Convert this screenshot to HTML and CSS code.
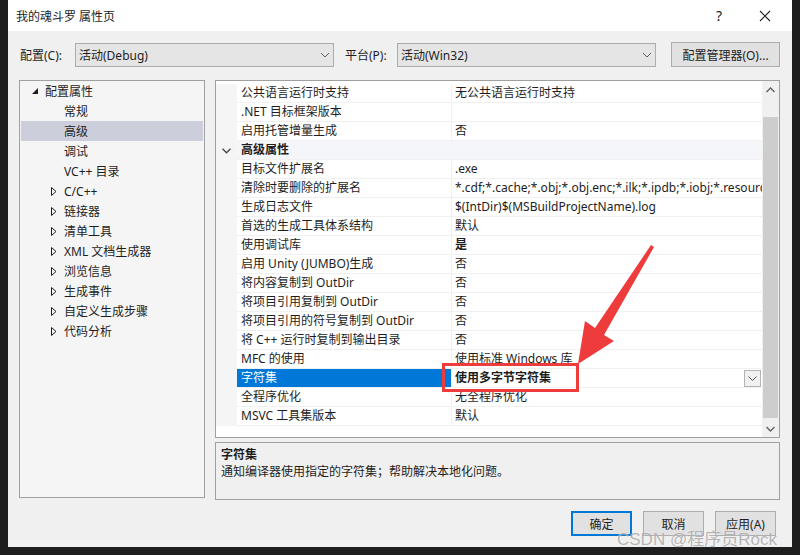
FILE: index.html
```html
<!DOCTYPE html>
<html>
<head>
<meta charset="utf-8">
<link rel="stylesheet" href="styles.css">
</head>
<body>

<div class="dialog">

  <div class="titleBar">
    <span class="titleText">我的魂斗罗 属性页</span>
    <span class="helpBtn">?</span>
    <span class="closeBtn">
      <svg width="12" height="12" viewBox="0 0 12 12"><path d="M1 1 L11 11 M11 1 L1 11" stroke="#222" stroke-width="1.1" fill="none"/></svg>
    </span>
  </div>

  <div class="configRow">
    <label class="configLabel">配置(C):</label>
    <div class="combo">
      <span>活动(Debug)</span>
      <svg class="comboArrow" width="10" height="6" viewBox="0 0 10 6"><path d="M1 1 L5 5 L9 1" stroke="#606060" fill="none"/></svg>
    </div>
    <label class="configLabel platformLabel">平台(P):</label>
    <div class="combo">
      <span>活动(Win32)</span>
      <svg class="comboArrow" width="10" height="6" viewBox="0 0 10 6"><path d="M1 1 L5 5 L9 1" stroke="#606060" fill="none"/></svg>
    </div>
    <button type="button" class="managerButton">配置管理器(O)...</button>
  </div>

  <div class="mainArea">

    <div class="tree">
      <div class="treeRow rootRow">
        <span class="twisty"><svg width="7" height="7" viewBox="0 0 7 7"><path d="M6 0 L6 6 L0 6 Z" fill="#1e1e1e"/></svg></span>
        <span>配置属性</span>
      </div>
      <div class="treeRow childRow"><span class="twisty"></span><span>常规</span></div>
      <div class="treeRow childRow treeSelected"><span class="twisty"></span><span>高级</span></div>
      <div class="treeRow childRow"><span class="twisty"></span><span>调试</span></div>
      <div class="treeRow childRow"><span class="twisty"></span><span>VC++ 目录</span></div>
      <div class="treeRow childRow"><span class="twisty"><svg class="closedArrow" width="6" height="9" viewBox="0 0 6 9"><path d="M0.5 0.5 L5 4.5 L0.5 8.5 Z" stroke="#1e1e1e" fill="none"/></svg></span><span>C/C++</span></div>
      <div class="treeRow childRow"><span class="twisty"><svg class="closedArrow" width="6" height="9" viewBox="0 0 6 9"><path d="M0.5 0.5 L5 4.5 L0.5 8.5 Z" stroke="#1e1e1e" fill="none"/></svg></span><span>链接器</span></div>
      <div class="treeRow childRow"><span class="twisty"><svg class="closedArrow" width="6" height="9" viewBox="0 0 6 9"><path d="M0.5 0.5 L5 4.5 L0.5 8.5 Z" stroke="#1e1e1e" fill="none"/></svg></span><span>清单工具</span></div>
      <div class="treeRow childRow"><span class="twisty"><svg class="closedArrow" width="6" height="9" viewBox="0 0 6 9"><path d="M0.5 0.5 L5 4.5 L0.5 8.5 Z" stroke="#1e1e1e" fill="none"/></svg></span><span>XML 文档生成器</span></div>
      <div class="treeRow childRow"><span class="twisty"><svg class="closedArrow" width="6" height="9" viewBox="0 0 6 9"><path d="M0.5 0.5 L5 4.5 L0.5 8.5 Z" stroke="#1e1e1e" fill="none"/></svg></span><span>浏览信息</span></div>
      <div class="treeRow childRow"><span class="twisty"><svg class="closedArrow" width="6" height="9" viewBox="0 0 6 9"><path d="M0.5 0.5 L5 4.5 L0.5 8.5 Z" stroke="#1e1e1e" fill="none"/></svg></span><span>生成事件</span></div>
      <div class="treeRow childRow"><span class="twisty"><svg class="closedArrow" width="6" height="9" viewBox="0 0 6 9"><path d="M0.5 0.5 L5 4.5 L0.5 8.5 Z" stroke="#1e1e1e" fill="none"/></svg></span><span>自定义生成步骤</span></div>
      <div class="treeRow childRow"><span class="twisty"><svg class="closedArrow" width="6" height="9" viewBox="0 0 6 9"><path d="M0.5 0.5 L5 4.5 L0.5 8.5 Z" stroke="#1e1e1e" fill="none"/></svg></span><span>代码分析</span></div>
    </div>

    <div class="rightColumn">

      <div class="propGrid">
        <div class="gridBody">
          <div class="propRow"><span class="gutter"></span><span class="propName">公共语言运行时支持</span><span class="propValue">无公共语言运行时支持</span></div>
          <div class="propRow"><span class="gutter"></span><span class="propName">.NET 目标框架版本</span><span class="propValue"></span></div>
          <div class="propRow"><span class="gutter"></span><span class="propName">启用托管增量生成</span><span class="propValue">否</span></div>
          <div class="propRow categoryRow">
            <span class="gutter"><svg width="9" height="6" viewBox="0 0 9 6"><path d="M0.5 0.8 L4.5 4.8 L8.5 0.8" stroke="#444" stroke-width="1.3" fill="none"/></svg></span>
            <span class="categoryName">高级属性</span>
          </div>
          <div class="propRow"><span class="gutter"></span><span class="propName">目标文件扩展名</span><span class="propValue">.exe</span></div>
          <div class="propRow"><span class="gutter"></span><span class="propName">清除时要删除的扩展名</span><span class="propValue">*.cdf;*.cache;*.obj;*.obj.enc;*.ilk;*.ipdb;*.iobj;*.resources;*.tlb;*.tli;*.tlh;*.tmp;*.rsp;*.pgc;*.pgd</span></div>
          <div class="propRow"><span class="gutter"></span><span class="propName">生成日志文件</span><span class="propValue">$(IntDir)$(MSBuildProjectName).log</span></div>
          <div class="propRow"><span class="gutter"></span><span class="propName">首选的生成工具体系结构</span><span class="propValue">默认</span></div>
          <div class="propRow"><span class="gutter"></span><span class="propName">使用调试库</span><span class="propValue boldValue">是</span></div>
          <div class="propRow"><span class="gutter"></span><span class="propName">启用 Unity (JUMBO)生成</span><span class="propValue">否</span></div>
          <div class="propRow"><span class="gutter"></span><span class="propName">将内容复制到 OutDir</span><span class="propValue">否</span></div>
          <div class="propRow"><span class="gutter"></span><span class="propName">将项目引用复制到 OutDir</span><span class="propValue">否</span></div>
          <div class="propRow"><span class="gutter"></span><span class="propName">将项目引用的符号复制到 OutDir</span><span class="propValue">否</span></div>
          <div class="propRow"><span class="gutter"></span><span class="propName">将 C++ 运行时复制到输出目录</span><span class="propValue">否</span></div>
          <div class="propRow"><span class="gutter"></span><span class="propName">MFC 的使用</span><span class="propValue">使用标准 Windows 库</span></div>
          <div class="propRow selectedRow">
            <span class="gutter"></span><span class="propName">字符集</span>
            <span class="propValue boldValue">使用多字节字符集
              <span class="cellDrop"><svg width="9" height="5" viewBox="0 0 9 5"><path d="M0.5 0.5 L4.5 4.5 L8.5 0.5" stroke="#555" fill="none"/></svg></span>
            </span>
          </div>
          <div class="propRow"><span class="gutter"></span><span class="propName">全程序优化</span><span class="propValue">无全程序优化</span></div>
          <div class="propRow"><span class="gutter"></span><span class="propName">MSVC 工具集版本</span><span class="propValue">默认</span></div>
        </div>
        <div class="vScroll">
          <div class="scrollBtn"><svg width="9" height="6" viewBox="0 0 9 6"><path d="M0.5 5 L4.5 1 L8.5 5" stroke="#606060" stroke-width="1.4" fill="none"/></svg></div>
          <div class="scrollTrack"><div class="scrollThumb"></div></div>
          <div class="scrollBtn"><svg width="9" height="6" viewBox="0 0 9 6"><path d="M0.5 1 L4.5 5 L8.5 1" stroke="#606060" stroke-width="1.4" fill="none"/></svg></div>
        </div>
      </div>

      <div class="descBox">
        <div class="descTitle">字符集</div>
        <div class="descText">通知编译器使用指定的字符集；帮助解决本地化问题。</div>
      </div>

    </div>
  </div>

  <div class="buttonRow">
    <button type="button" class="dlgButton defaultButton">确定</button>
    <button type="button" class="dlgButton">取消</button>
    <button type="button" class="dlgButton">应用(A)</button>
  </div>

  <div class="watermark">CSDN @程序员Rock</div>
</div>

<svg class="annotation" width="800" height="555" viewBox="0 0 800 555">
  <rect x="443.5" y="364.5" width="134" height="26" fill="none" stroke="#ee3b3b" stroke-width="3"/>
  <polygon points="578,364 585,321 595,328 651,245 654,247 604,335 614,341" fill="#ee3b3b"/>
</svg>

</body>
</html>
```

FILE: styles.css
```css
body {
	margin: 0;
	width: 800px;
	height: 555px;
	overflow: hidden;
	background: #1e1e1e;
	font-family: "Noto Sans", "Noto Sans CJK SC", sans-serif;
	font-size: 12px;
	color: #1e1e1e;
	position: relative;
}

.dialog {
	margin-left: 8px;
	width: 784px;
	height: 547px;
	background: #f0f0f0;
	position: relative;
}

.titleBar {
	height: 31px;
	background: #ffffff;
	display: flex;
	align-items: center;
	padding-left: 8px;
}

.titleText {
	flex: 1;
	font-size: 12px;
}

.helpBtn {
	width: 46px;
	text-align: center;
	font-size: 14px;
	color: #222;
}

.closeBtn {
	width: 46px;
	display: flex;
	justify-content: center;
	margin-right: 4px;
}

.configRow {
	display: flex;
	align-items: center;
	margin-top: 11px;
	height: 25px;
	padding-left: 12px;
}

.configLabel {
	width: 55px;
}

.platformLabel {
	margin-left: 11px;
	width: 52px;
}

.combo {
	box-sizing: border-box;
	width: 259px;
	height: 24px;
	background: #e5e5e5;
	border: 1px solid #acacac;
	display: flex;
	align-items: center;
	padding-left: 3px;
}

.combo span {
	flex: 1;
}

.comboArrow {
	margin-right: 3px;
}

.managerButton {
	box-sizing: border-box;
	margin-left: 15px;
	width: 109px;
	height: 25px;
	background: #e1e1e1;
	border: 1px solid #adadad;
	font-family: inherit;
	font-size: 12px;
	color: #1e1e1e;
	padding: 0;
}

.mainArea {
	display: flex;
	margin-top: 13px;
	padding-left: 11px;
}

.tree {
	box-sizing: border-box;
	width: 186px;
	height: 418px;
	border: 1px solid #a0a0a0;
	background: #f5f5f5;
	padding: 0 1px;
}

.treeRow {
	height: 20px;
	display: flex;
	align-items: center;
}

.rootRow {
	padding-left: 8px;
}

.childRow {
	padding-left: 27px;
}

.twisty {
	width: 16px;
	display: flex;
	align-items: center;
}

.rootRow .twisty {
	padding-left: 3px;
	width: 13px;
}

.closedArrow {
	margin-left: 3px;
}

.treeSelected {
	background: #cccedb;
}

.rightColumn {
	margin-left: 10px;
	width: 565px;
}

.propGrid {
	box-sizing: border-box;
	height: 358px;
	border: 1px solid #a0a0a0;
	background: #ffffff;
	display: flex;
}

.gridBody {
	flex: 1;
	padding-top: 3px;
	overflow: hidden;
}

.propRow {
	display: flex;
	height: 19px;
}

.gutter {
	width: 21px;
	flex: none;
	background: #f5f5f5;
	display: flex;
	align-items: center;
	justify-content: center;
}

.propName,
.propValue,
.categoryName {
	box-sizing: border-box;
	height: 19px;
	line-height: 18px;
	border-bottom: 1px solid #f0f0f0;
	white-space: nowrap;
	overflow: hidden;
}

.propName {
	width: 215px;
	flex: none;
	padding-left: 4px;
	border-right: 1px solid #f0f0f0;
}

.propValue {
	flex: 1;
	padding-left: 3px;
	position: relative;
}

.boldValue {
	font-weight: bold;
}

.categoryName {
	flex: 1;
	padding-left: 4px;
	font-weight: bold;
	background: #f5f6f9;
}

.categoryRow .gutter {
	justify-content: flex-start;
	padding-left: 6px;
	box-sizing: border-box;
}

.selectedRow .propName {
	background: #0078d7;
	color: #ffffff;
}

.cellDrop {
	position: absolute;
	right: 1px;
	top: 1px;
	box-sizing: border-box;
	width: 17px;
	height: 17px;
	border: 1px solid #b4b4b4;
	background: #f0f0f0;
	display: flex;
	align-items: center;
	justify-content: center;
}

.vScroll {
	width: 17px;
	flex: none;
	background: #f0f0f0;
	display: flex;
	flex-direction: column;
}

.scrollBtn {
	height: 17px;
	display: flex;
	align-items: center;
	justify-content: center;
}

.scrollTrack {
	flex: 1;
	padding: 19px 1px 2px 1px;
}

.scrollThumb {
	height: 100%;
	background: #cdcdcd;
}

.descBox {
	box-sizing: border-box;
	margin-top: 4px;
	height: 58px;
	border: 1px solid #a0a0a0;
	padding: 3px 5px;
	line-height: 17px;
}

.descTitle {
	font-weight: bold;
}

.buttonRow {
	display: flex;
	justify-content: flex-end;
	gap: 11px;
	margin-top: 11px;
	padding-right: 16px;
}

.dlgButton {
	box-sizing: border-box;
	width: 61px;
	height: 25px;
	background: #e1e1e1;
	border: 1px solid #adadad;
	font-family: inherit;
	font-size: 12px;
	color: #1e1e1e;
	padding: 0;
}

.defaultButton {
	border: 2px solid #0078d7;
}

.watermark {
	position: absolute;
	left: 609px;
	top: 525px;
	font-family: "Liberation Sans", "Noto Sans CJK SC", sans-serif;
	font-size: 17px;
	color: rgba(120, 120, 120, 0.55);
	text-shadow: 0 0 1px rgba(255, 255, 255, 0.8);
	white-space: nowrap;
}

.annotation {
	position: absolute;
	left: 0;
	top: 0;
	pointer-events: none;
}
```
